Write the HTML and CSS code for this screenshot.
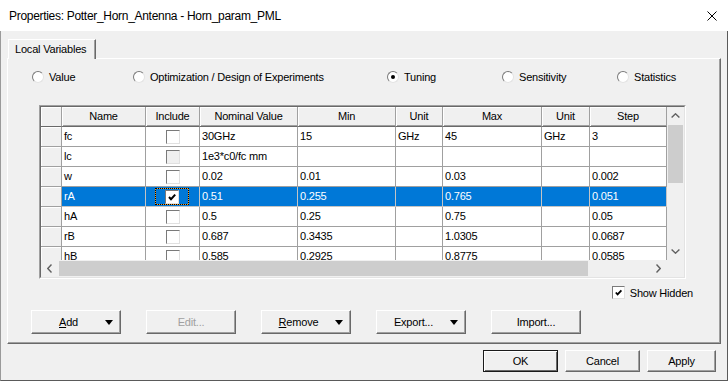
FILE: index.html
```html
<!DOCTYPE html>
<html lang="en">
<head>
  <meta charset="UTF-8" />
  <meta name="viewport" content="width=device-width, initial-scale=1.0" />
  <title>Properties: Potter_Horn_Antenna - Horn_param_PML</title>
  <link rel="stylesheet" href="styles.css">
</head>
<body>
  <div class="window">
    <div class="titlebar">
      <span class="title">Properties: Potter_Horn_Antenna - Horn_param_PML</span>
      <svg class="close" width="10" height="10" viewBox="0 0 10 10"><path d="M0.5 0.5L9.5 9.5M9.5 0.5L0.5 9.5" stroke="#000" stroke-width="1" fill="none"/></svg>
    </div>

    <div class="dialog">
      <div class="tabs">
        <div class="tab">Local Variables</div>
      </div>

      <div class="panel">
        <div class="modes">
          <label class="radio"><span class="circle"></span>Value</label>
          <label class="radio"><span class="circle"></span>Optimization / Design of Experiments</label>
          <label class="radio on"><span class="circle"></span>Tuning</label>
          <label class="radio"><span class="circle"></span>Sensitivity</label>
          <label class="radio"><span class="circle"></span>Statistics</label>
        </div>

        <div class="grid-frame">
          <div class="grid-inner">
            <div class="grid-main">
              <div class="table">
                <div class="row head">
                  <div class="rh"></div>
                  <div>Name</div>
                  <div>Include</div>
                  <div>Nominal Value</div>
                  <div>Min</div>
                  <div>Unit</div>
                  <div>Max</div>
                  <div>Unit</div>
                  <div>Step</div>
                </div>
                <div class="row">
                  <div class="rh"></div>
                  <div>fc</div>
                  <div class="inc"><span class="check"></span></div>
                  <div>30GHz</div>
                  <div>15</div>
                  <div>GHz</div>
                  <div>45</div>
                  <div>GHz</div>
                  <div>3</div>
                </div>
                <div class="row">
                  <div class="rh"></div>
                  <div>lc</div>
                  <div class="inc"><span class="check disabled"></span></div>
                  <div>1e3*c0/fc mm</div>
                  <div></div>
                  <div></div>
                  <div></div>
                  <div></div>
                  <div></div>
                </div>
                <div class="row">
                  <div class="rh"></div>
                  <div>w</div>
                  <div class="inc"><span class="check"></span></div>
                  <div>0.02</div>
                  <div>0.01</div>
                  <div></div>
                  <div>0.03</div>
                  <div></div>
                  <div>0.002</div>
                </div>
                <div class="row selected">
                  <div class="rh"></div>
                  <div>rA</div>
                  <div class="inc">
                    <span class="focus">
                      <span class="check"><svg width="10" height="10" viewBox="0 0 10 10"><polyline points="2,5 4,7.2 8.2,2.6" stroke="#000" stroke-width="2" fill="none"/></svg></span>
                    </span>
                  </div>
                  <div>0.51</div>
                  <div>0.255</div>
                  <div></div>
                  <div>0.765</div>
                  <div></div>
                  <div>0.051</div>
                </div>
                <div class="row">
                  <div class="rh"></div>
                  <div>hA</div>
                  <div class="inc"><span class="check"></span></div>
                  <div>0.5</div>
                  <div>0.25</div>
                  <div></div>
                  <div>0.75</div>
                  <div></div>
                  <div>0.05</div>
                </div>
                <div class="row">
                  <div class="rh"></div>
                  <div>rB</div>
                  <div class="inc"><span class="check"></span></div>
                  <div>0.687</div>
                  <div>0.3435</div>
                  <div></div>
                  <div>1.0305</div>
                  <div></div>
                  <div>0.0687</div>
                </div>
                <div class="row">
                  <div class="rh"></div>
                  <div>hB</div>
                  <div class="inc"><span class="check"></span></div>
                  <div>0.585</div>
                  <div>0.2925</div>
                  <div></div>
                  <div>0.8775</div>
                  <div></div>
                  <div>0.0585</div>
                </div>
              </div>

              <div class="vscroll">
                <div class="arrow"><svg width="9" height="5" viewBox="0 0 9 5"><path d="M0.6 4.5L4.5 0.8L8.4 4.5" stroke="#606060" stroke-width="1.4" fill="none"/></svg></div>
                <div class="vthumb"></div>
                <div class="track"></div>
                <div class="arrow"><svg width="9" height="5" viewBox="0 0 9 5"><path d="M0.6 0.5L4.5 4.2L8.4 0.5" stroke="#606060" stroke-width="1.4" fill="none"/></svg></div>
              </div>
            </div>

            <div class="grid-bottom">
              <div class="hscroll">
                <div class="arrow"><svg width="5" height="9" viewBox="0 0 5 9"><path d="M4.5 0.6L0.8 4.5L4.5 8.4" stroke="#606060" stroke-width="1.4" fill="none"/></svg></div>
                <div class="hthumb"></div>
                <div class="track"></div>
                <div class="arrow"><svg width="5" height="9" viewBox="0 0 5 9"><path d="M0.5 0.6L4.2 4.5L0.5 8.4" stroke="#606060" stroke-width="1.4" fill="none"/></svg></div>
              </div>
              <div class="corner"></div>
            </div>
          </div>
        </div>

        <div class="show-hidden">
          <span class="check small"><svg width="9" height="9" viewBox="0 0 10 10"><polyline points="2,5 4,7.2 8.2,2.6" stroke="#000" stroke-width="2" fill="none"/></svg></span>
          <span>Show Hidden</span>
        </div>

        <div class="actions">
          <button class="btn split"><span class="label"><u>A</u>dd</span><span class="caret"></span></button>
          <button class="btn" disabled>Edit...</button>
          <button class="btn split"><span class="label"><u>R</u>emove</span><span class="caret"></span></button>
          <button class="btn split"><span class="label">Export...</span><span class="caret"></span></button>
          <button class="btn">Import...</button>
        </div>
      </div>

      <div class="footer">
        <button class="btn default">OK</button>
        <button class="btn">Cancel</button>
        <button class="btn apply">Apply</button>
      </div>
    </div>
  </div>
</body>
</html>
```

FILE: styles.css
```css
body {
  margin: 0;
  font-family: "Liberation Sans", Arial, sans-serif;
  font-size: 11px;
  letter-spacing: -0.2px;
  color: #000;
  background: #fff;
}

.window {
  width: 728px;
  height: 381px;
  display: flex;
  flex-direction: column;
  overflow: hidden;
}

.titlebar {
  height: 31px;
  flex: none;
  display: flex;
  align-items: center;
  justify-content: space-between;
  padding: 0 11px 0 9px;
  background: #fff;
  font-size: 12px;
  letter-spacing: -0.3px;
}

.close {
  margin-top: 1px;
}

.dialog {
  flex: 1;
  display: flex;
  flex-direction: column;
  background: #f0f0f0;
  border-left: 1px solid #9a9a9a;
  border-right: 1px solid #5a5a5a;
  border-bottom: 1px solid #5a5a5a;
}

/* tab strip */
.tabs {
  display: flex;
  padding: 8px 0 0 7px;
}

.tab {
  position: relative;
  z-index: 1;
  width: 88px;
  height: 20px;
  box-sizing: border-box;
  margin-bottom: -1px;
  padding-left: 6px;
  line-height: 18px;
  background: #f0f0f0;
  border-top: 1px solid #fff;
  border-left: 1px solid #fff;
  border-right: 1px solid #696969;
  box-shadow: inset -1px 0 #a0a0a0;
}

.panel {
  height: 286px;
  box-sizing: border-box;
  margin: 0 6px;
  padding-top: 10px;
  border: 1px solid;
  border-color: #fff #696969 #696969 #fff;
  box-shadow: inset -1px -1px #a0a0a0;
}

/* mode radios */
.modes {
  display: grid;
  grid-template-columns: 101px 254px 115px 115px auto;
  align-items: center;
  height: 16px;
  padding-left: 24px;
}

.radio {
  display: flex;
  align-items: center;
  gap: 5px;
}

.circle {
  width: 12px;
  height: 12px;
  box-sizing: border-box;
  border-radius: 50%;
  background: #fff;
  border: 1px solid;
  border-color: #7a7a7a #e3e3e3 #e3e3e3 #7a7a7a;
  display: flex;
  align-items: center;
  justify-content: center;
}

.radio.on .circle::after {
  content: "";
  width: 4px;
  height: 4px;
  border-radius: 50%;
  background: #000;
}

/* grid */
.grid-frame {
  width: 647px;
  box-sizing: border-box;
  margin: 20px 0 0 31px;
  border: 1px solid;
  border-color: #a0a0a0 #fff #fff #a0a0a0;
}

.grid-inner {
  border: 1px solid;
  border-color: #696969 #e3e3e3 #e3e3e3 #696969;
}

.grid-main {
  display: flex;
  height: 153px;
}

.table {
  width: 626px;
  overflow: hidden;
  background: #fff;
}

.row {
  display: grid;
  grid-template-columns: 21px 84px 54px 98px 98px 47px 99px 48px 77px;
  height: 20px;
}

.row > div {
  box-sizing: border-box;
  padding-left: 2px;
  line-height: 19px;
  white-space: nowrap;
  overflow: hidden;
  background: #fff;
  border-right: 1px solid #a0a0a0;
  border-bottom: 1px solid #a0a0a0;
}

.row > .rh {
  background: #f0f0f0;
  box-shadow: inset 1px 1px #fff;
}

.head > div {
  padding-left: 0;
  text-align: center;
  line-height: 18px;
  background: #f0f0f0;
  border-bottom-color: #696969;
  box-shadow: inset 1px 1px #fff, inset 0 -1px #a0a0a0;
}

.row > .inc {
  display: flex;
  align-items: center;
  justify-content: center;
  padding-left: 0;
}

.row.selected > div:not(.rh) {
  background: #0078d7;
  color: #fff;
  border-right-color: #c4c4c4;
  border-bottom-color: #c4c4c4;
}

.check {
  width: 14px;
  height: 14px;
  box-sizing: border-box;
  background: #fff;
  border: 1px solid;
  border-color: #7a7a7a #e0e0e0 #e0e0e0 #7a7a7a;
  display: flex;
  align-items: center;
  justify-content: center;
}

.check.disabled {
  background: #f0f0f0;
}

.check.small {
  width: 13px;
  height: 13px;
}

.focus {
  width: 34px;
  height: 17px;
  box-sizing: border-box;
  margin-left: -1px;
  display: flex;
  align-items: center;
  justify-content: center;
  border: 1px dotted #000;
  background: linear-gradient(#0078d7, #0078d7) padding-box, #f59a23 border-box;
}

/* scrollbars */
.vscroll {
  width: 17px;
  display: flex;
  flex-direction: column;
  background: #f0f0f0;
}

.arrow {
  flex: none;
  width: 17px;
  height: 17px;
  display: flex;
  align-items: center;
  justify-content: center;
}

.vthumb {
  height: 58px;
  margin: 1px 1px 0;
  background: #cdcdcd;
}

.track {
  flex: 1;
}

.grid-bottom {
  display: flex;
  height: 17px;
}

.hscroll {
  width: 626px;
  display: flex;
  background: #f0f0f0;
}

.hthumb {
  width: 529px;
  margin: 1px 0 1px 1px;
  background: #cdcdcd;
}

.corner {
  width: 17px;
  background: #f0f0f0;
}

.show-hidden {
  display: flex;
  align-items: center;
  justify-content: flex-end;
  gap: 5px;
  height: 13px;
  margin-top: 7px;
  padding-right: 27px;
}

/* buttons */
.btn {
  width: 90px;
  height: 24px;
  box-sizing: border-box;
  padding: 0;
  font: inherit;
  letter-spacing: inherit;
  color: #000;
  background: #f0f0f0;
  border: 1px solid;
  border-color: #fff #696969 #696969 #fff;
  box-shadow: inset -1px -1px #a0a0a0;
}

.btn:disabled {
  color: #a0a0a0;
}

.btn.split {
  display: flex;
  align-items: center;
}

.btn .label {
  flex: 1;
  text-align: center;
}

.caret {
  width: 0;
  height: 0;
  margin-right: 7px;
  border-left: 4.5px solid transparent;
  border-right: 4.5px solid transparent;
  border-top: 5px solid #000;
}

.actions {
  display: flex;
  gap: 25px;
  margin-top: 11px;
  padding-left: 23px;
}

.footer {
  display: flex;
  justify-content: flex-end;
  gap: 7px;
  padding: 6px 11px 0 0;
}

.footer .btn {
  width: 75px;
  height: 22px;
}

.footer .apply {
  width: 69px;
}

.footer .default {
  border-color: #1a1a1a;
  box-shadow: inset 1px 1px #fff, inset -1px -1px #696969;
}
```
